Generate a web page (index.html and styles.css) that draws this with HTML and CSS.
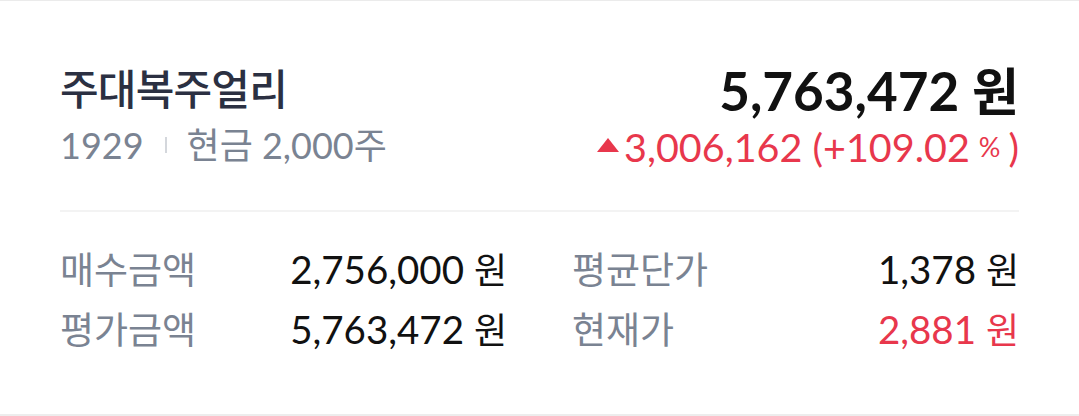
FILE: index.html
```html
<!DOCTYPE html>
<html lang="ko">
<head>
<meta charset="utf-8">
<link rel="stylesheet" href="styles.css">
</head>
<body>
<section class="card">
  <div class="head">
    <div class="name-block">
      <div class="name">주대복주얼리</div>
      <div class="sub"><span class="code">1929</span><span class="sep"></span><span class="qty">현금 2,000주</span></div>
    </div>
    <div class="value-block">
      <div class="total">5,763,472 <span class="won">원</span></div>
      <div class="change"><span class="tri"></span>3,006,162 (+109.02<span class="pct">%</span>)</div>
    </div>
  </div>
  <div class="divider"></div>
  <div class="stats">
    <div class="col">
      <div class="label">매수금액</div><div class="val">2,756,000 <span class="won">원</span></div>
      <div class="label">평가금액</div><div class="val">5,763,472 <span class="won">원</span></div>
    </div>
    <div class="col">
      <div class="label">평균단가</div><div class="val">1,378 <span class="won">원</span></div>
      <div class="label">현재가</div><div class="val up">2,881 <span class="won">원</span></div>
    </div>
  </div>
</section>
</body>
</html>
```
FILE: styles.css
```css
* { box-sizing: border-box; }
html, body { margin: 0; padding: 0; background: #fff; }
body {
  font-family: Lato, "Noto Sans CJK KR", sans-serif;
  width: 1079px;
  height: 416px;
  overflow: hidden;
}
.card {
  height: 416px;
  border-top: 1px solid #ebebeb;
  border-bottom: 2px solid #ededed;
  padding: 0 60px 0 60px;
}
.head {
  display: flex;
  justify-content: space-between;
  align-items: flex-start;
  padding-top: 56px;
  height: 209px;
}
.name {
  font-family: "Noto Sans CJK KR", sans-serif;
  font-size: 42px;
  font-weight: 500;
  color: #2b3042;
  line-height: 56px;
  margin-top: 2px;
  letter-spacing: -0.8px;
}
.sub {
  display: flex;
  align-items: center;
  font-size: 36px;
  color: #7a8392;
  line-height: 46px;
  margin-top: 7px;
}
.sep {
  width: 2px;
  height: 16px;
  background: #d4d7dc;
  margin: 0 20px 0 21px;
}
.value-block { text-align: right; }
.total {
  font-size: 53px;
  font-weight: 700;
  color: #111;
  line-height: 64px;
}
.total .won {
  display: inline-block;
  font-family: "Noto Sans CJK KR", sans-serif;
  font-weight: 700;
  font-size: 51px;
  line-height: 64px;
}
.change {
  font-size: 39.5px;
  color: #e8374c;
  line-height: 48px;
  display: flex;
  align-items: center;
  justify-content: flex-end;
}
.tri {
  width: 0; height: 0;
  border-left: 11px solid transparent;
  border-right: 11px solid transparent;
  border-bottom: 14px solid #e8374c;
  margin-right: 5px;
  margin-top: -4px;
}
.pct { font-size: 27px; margin: 0 8px 0 9px; }
.divider {
  height: 2px;
  background: #f3f3f3;
}
.stats {
  display: grid;
  grid-template-columns: 1fr 1fr;
  column-gap: 65px;
  padding-top: 33px;
}
.col {
  display: grid;
  grid-template-columns: auto auto;
  justify-content: space-between;
  row-gap: 13px;
}
.label {
  font-family: "Noto Sans CJK KR", sans-serif;
  font-size: 37px;
  color: #7a8392;
  line-height: 46px;
}
.val {
  font-size: 38.5px;
  color: #111;
  line-height: 46px;
  text-align: right;
}
.val .won {
  display: inline-block;
  font-family: "Noto Sans CJK KR", sans-serif;
  font-size: 36px;
  line-height: 46px;
}
.val.up { color: #e8374c; }
```
